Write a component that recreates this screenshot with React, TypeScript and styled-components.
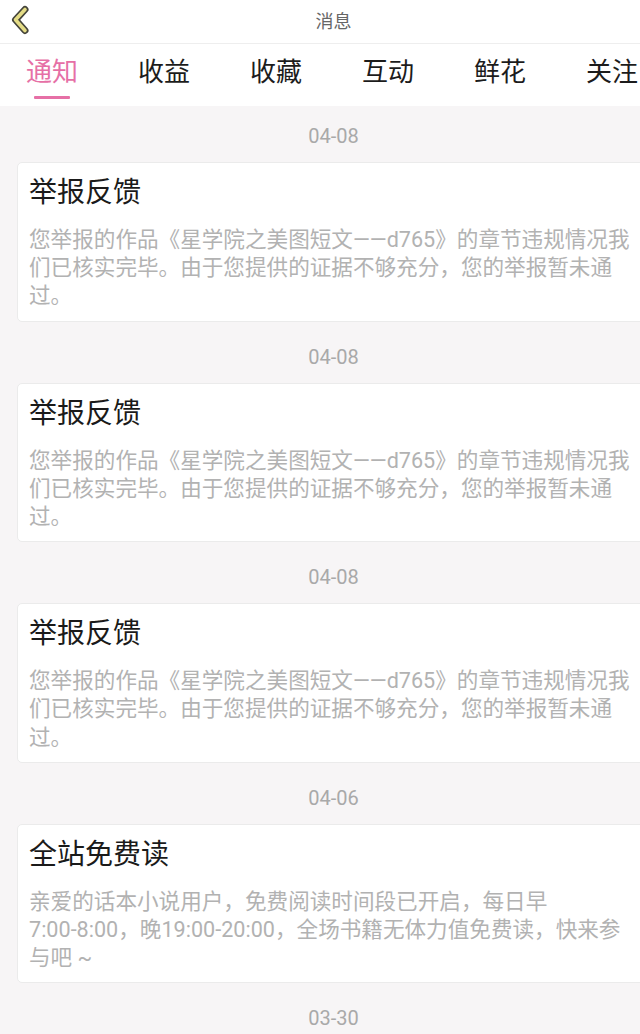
import React from "react";
import styled, { createGlobalStyle } from "styled-components";

const GlobalStyle = createGlobalStyle`
  html, body {
    margin: 0;
    padding: 0;
    overflow: hidden;
    background: #f7f5f6;
  }
  body {
    font-family: "Roboto", "Noto Sans CJK SC", sans-serif;
  }
`;

const Page = styled.div`
  width: 667px;
  min-height: 1034px;
  background: #f7f5f6;
`;

const Header = styled.header`
  height: 43px;
  background: #fff;
  border-bottom: 1px solid #eeeeee;
  display: grid;
  grid-template-columns: 1fr auto 1fr;
  align-items: center;
`;

const BackButton = styled.button`
  justify-self: start;
  width: 40px;
  height: 43px;
  padding: 0;
  border: 0;
  background: transparent;
  display: block;
`;

const HeaderTitle = styled.h1`
  margin: 0;
  font-size: 18px;
  font-weight: 400;
  color: #666;
  line-height: 43px;
`;

const TabBar = styled.nav`
  height: 62px;
  box-sizing: border-box;
  background: #fff;
  display: flex;
  gap: 60px;
  padding: 15px 0 0 26px;
`;

const Tab = styled.div<{ $active?: boolean }>`
  display: flex;
  flex-direction: column;
  align-items: center;
  flex: 0 0 auto;
  font-size: 26px;
  line-height: 27px;
  color: ${(p) => (p.$active ? "#e670a6" : "#1c1c1c")};
  white-space: nowrap;
`;

const TabLine = styled.span<{ $active?: boolean }>`
  width: 36px;
  height: 3px;
  margin-top: 10px;
  border-radius: 1px;
  background: ${(p) => (p.$active ? "#e670a6" : "transparent")};
`;

const List = styled.main`
  padding-top: 18px;
`;

const Section = styled.section`
  display: flex;
  flex-direction: column;
`;

const DateLabel = styled.div`
  text-align: center;
  font-size: 20px;
  line-height: 24px;
  color: #a9a9a9;
  margin-bottom: 14px;
`;

const Card = styled.article`
  margin: 0 17px 23px;
  box-sizing: border-box;
  background: #fff;
  border: 1px solid #ebebeb;
  border-radius: 5px;
  padding: 15px 18px 10px 11px;
`;

const CardTitle = styled.h2`
  margin: 0 0 18px;
  font-size: 28px;
  line-height: 30px;
  font-weight: 400;
  color: #1a1a1a;
`;

const CardBody = styled.p`
  margin: 0;
  font-size: 21.6px;
  line-height: 28.2px;
  color: #b2b2b2;
`;

const BackIcon = () => (
  <svg width="40" height="43" viewBox="0 0 40 43">
    <polyline
      points="25,9.5 15.5,19.8 25,30.5"
      fill="none"
      stroke="#44443a"
      strokeWidth="7"
      strokeLinecap="round"
      strokeLinejoin="round"
    />
    <polyline
      points="25,9.5 15.5,19.8 25,30.5"
      fill="none"
      stroke="#e4dc86"
      strokeWidth="3.6"
      strokeLinecap="round"
      strokeLinejoin="round"
    />
  </svg>
);

const tabs = ["通知", "收益", "收藏", "互动", "鲜花", "关注"];

const WJ = "\u2060";

const report =
  "您举报的作品《星学院之美图短文——d765》的章节违规情况我们已核实完毕。由于您提供的证据不够充分，您的举报暂未通过。";

const freeRead = `亲爱的话本小说用户，免费阅读时间段已开启，每日早7:00-${WJ}8:00，晚19:00-${WJ}20:00，全场书籍无体力值免费读，快来参与吧 ~`;

const messages = [
  { date: "04-08", title: "举报反馈", body: report },
  { date: "04-08", title: "举报反馈", body: report },
  { date: "04-08", title: "举报反馈", body: report },
  { date: "04-06", title: "全站免费读", body: freeRead },
  { date: "03-30", title: "全站免费读", body: "亲爱的话本小说用户，免费阅读时间段已开启。" },
];

export default function App() {
  return (
    <Page>
      <GlobalStyle />
      <Header>
        <BackButton aria-label="返回">
          <BackIcon />
        </BackButton>
        <HeaderTitle>消息</HeaderTitle>
        <span />
      </Header>
      <TabBar>
        {tabs.map((t, i) => (
          <Tab key={t} $active={i === 0}>
            {t}
            <TabLine $active={i === 0} />
          </Tab>
        ))}
      </TabBar>
      <List>
        {messages.map((m, i) => (
          <Section key={i}>
            <DateLabel>{m.date}</DateLabel>
            <Card>
              <CardTitle>{m.title}</CardTitle>
              <CardBody>{m.body}</CardBody>
            </Card>
          </Section>
        ))}
      </List>
    </Page>
  );
}
